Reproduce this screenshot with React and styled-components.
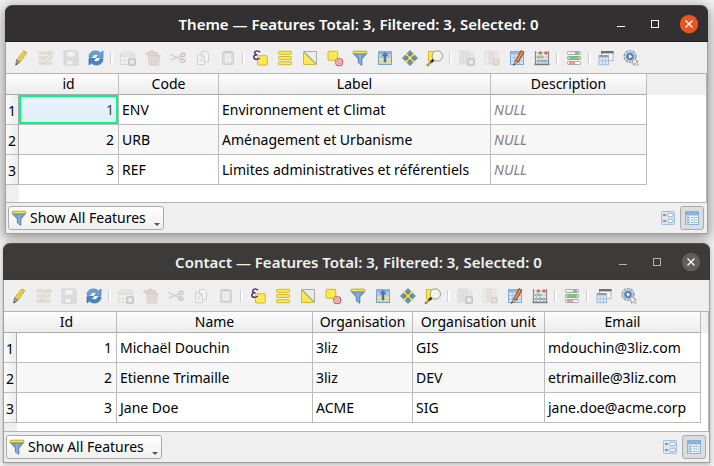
import React from "react";
import styled, { createGlobalStyle, css } from "styled-components";

const GlobalStyle = createGlobalStyle`
  * { box-sizing: border-box; }
  html { background: #f2f2f2; }
  body {
    margin: 0;
    font-family: "Noto Sans", "Open Sans", sans-serif;
    font-size: 14px;
    line-height: 20px;
    color: #000;
    overflow: hidden;
  }
  button { font: inherit; color: inherit; }
`;

const Desktop = styled.main`
  display: flex;
  flex-direction: column;
  gap: 9px;
  padding: 5px 4px 4px 3px;
`;

const Window = styled.section`
  margin: ${(p) => (p.$active ? "0 2px" : "0")};
  border-radius: 7px 7px 0 0;
  position: relative;
  z-index: ${(p) => (p.$active ? 0 : 1)};
  box-shadow: ${(p) =>
    p.$active
      ? "0 3px 14px 1px rgba(0, 0, 0, 0.42)"
      : "0 1px 5px rgba(0, 0, 0, 0.3)"};
`;

const TitleBar = styled.header`
  display: grid;
  grid-template-columns: 92px 1fr 88px;
  align-items: center;
  height: 37px;
  border-radius: 7px 7px 0 0;
  border-top: 1px solid ${(p) => (p.$active ? "#4b4948" : "#53514e")};
  border-bottom: 1px solid ${(p) => (p.$active ? "#1d1c1c" : "#3a3936")};
  background: ${(p) => (p.$active ? "#323030" : "#3c3b39")};
  color: ${(p) => (p.$active ? "#fff" : "#f1f1ef")};
`;

const Title = styled.h1`
  grid-column: 2;
  margin: 0;
  font-size: 15px;
  line-height: 20px;
  font-weight: 600;
  text-align: center;
  white-space: nowrap;
`;

const WindowButtons = styled.div`
  display: flex;
  align-items: center;
  justify-content: flex-end;
  gap: 14px;
  padding-right: 9px;
`;

const WindowButton = styled.button`
  display: flex;
  width: 20px;
  height: 20px;
  flex: none;
  padding: 0;
  border: 0;
  background: none;
  color: ${(p) => (p.$active ? "#fff" : "#b5b4b2")};
`;

const Client = styled.div`
  border: 1px solid #a0a0a0;
  border-top: 0;
  background: #efefef;
`;

const ToolBar = styled.div`
  display: flex;
  align-items: center;
  height: 31px;
  padding-left: 2px;
`;

const ToolButton = styled.button`
  display: flex;
  align-items: center;
  justify-content: center;
  width: 25px;
  height: 25px;
  flex: none;
  padding: 0;
  border: 0;
  background: none;
  opacity: ${(p) => (p.disabled ? 0.3 : 1)};
`;

const Separator = styled.span`
  display: flex;
  justify-content: center;
  width: 7px;
  height: 12px;
  flex: none;
  &::before {
    content: "";
    width: 2px;
    background: #fbfbfb;
    border-left: 1px solid #d2d2d2;
  }
`;

const Viewport = styled.div`
  border: 1px solid #b4b4b4;
  border-left: 0;
  padding-bottom: ${(p) => (p.$active ? "17px" : "8px")};
  background:
    linear-gradient(#efefef, #efefef) 0 0 / 100% 21px no-repeat,
    linear-gradient(#efefef, #efefef) 0 0 / 13px 100% no-repeat,
    #fff;
`;

const Grid = styled.table`
  table-layout: fixed;
  width: ${(p) => p.$width}px;
  border-collapse: separate;
  border-spacing: 0;
`;

const Col = styled.col`
  width: ${(p) => p.$width}px;
`;

const lines = css`
  border-right: 1px solid #bcbcbc;
  border-bottom: 1px solid #bcbcbc;
  white-space: nowrap;
`;

const ColumnHeader = styled.th`
  ${lines}
  height: 21px;
  padding: 0;
  border-bottom-color: #aaa;
  background: linear-gradient(#fdfdfd, #ececec);
  font-weight: 400;
  line-height: 20px;
  text-align: center;
`;

const Corner = styled.td`
  height: 21px;
  padding: 0;
  border-bottom: 1px solid #aaa;
  background: linear-gradient(#fdfdfd, #ececec);
`;

const RowHeader = styled.th`
  ${lines}
  height: 30px;
  padding: 2px 0 0;
  border-right-color: #aaa;
  background: linear-gradient(90deg, #fbfbfb, #ececec);
  font-weight: 400;
  line-height: 20px;
  text-align: center;
`;

const Row = styled.tr`
  background: #fff;
  &:nth-child(even) { background: #f7f7f7; }
`;

const Cell = styled.td`
  ${lines}
  height: 30px;
  padding: 0 4px 0 3px;
  text-align: ${(p) => (p.$numeric ? "right" : "left")};
  ${(p) => p.$null && "color: #808080; font-style: italic;"}
  ${(p) =>
    p.$selected &&
    "background: linear-gradient(#e8f5ff, #e2edf5); color: #444; box-shadow: inset 0 0 0 2px #00fa80;"}
`;

const StatusBar = styled.footer`
  display: flex;
  align-items: center;
  justify-content: space-between;
  height: 30px;
  padding: 0 3px 0 2px;
`;

const FilterButton = styled.button`
  display: flex;
  align-items: center;
  gap: 3px;
  height: 24px;
  padding: 0 3px 0 2px;
  border: 1px solid #aaa;
  border-radius: 3px;
  background: linear-gradient(#fff, #f0f0f0);
  white-space: nowrap;
`;

const MenuArrow = styled.span`
  align-self: flex-end;
  margin: 0 0 3px 5px;
  border: 3px solid transparent;
  border-top-color: #555;
  border-bottom: 0;
`;

const ViewSwitch = styled.div`
  display: flex;
`;

const ViewButton = styled.button`
  display: flex;
  align-items: center;
  justify-content: center;
  width: 24px;
  height: 24px;
  padding: 0;
  border: 1px solid ${(p) => (p["aria-pressed"] ? "#aaa" : "transparent")};
  border-radius: 3px;
  background: ${(p) => (p["aria-pressed"] ? "#dcdcdc" : "transparent")};
`;

const Svg = styled.svg`
  display: block;
  width: 16px;
  height: 16px;
  flex: none;
  overflow: visible;
`;

const YELLOW = "#fce94f";
const GOLD = "#d4b82e";
const BLUE = "#6b93c0";

const Star = () => (
  <g>
    <rect x="8.5" y="8.5" width="7" height="7" rx="1" fill="#8a8a80" stroke="#65655c" />
    <path d="M12 9.7v4.6M9.7 12h4.6M10.4 10.4l3.2 3.2M13.6 10.4l-3.2 3.2" stroke="#fff" />
  </g>
);

const FunnelShape = () => (
  <g>
    <path d="M1.2 3.5h13.6L9.8 9v6.3L6.4 13V9z" fill="#729fcf" stroke="#446d9c" strokeWidth=".8" />
    <path d="M8 5v9" stroke="#9dbfe2" />
    <rect x="1.2" y="1.2" width="13.6" height="2.5" rx=".8" fill={YELLOW} stroke="#a58f26" strokeWidth=".8" />
  </g>
);

const shapes = {
  edit: (
    <g>
      <path d="M3.5 10 10.8 1l3 1.6L7 12.3z" fill={YELLOW} stroke="#a48e2e" strokeWidth=".8" />
      <path d="m5.2 11 7.2-9" stroke="#c0a21e" />
      <path d="m3.5 10-.8 5.2L7 12.3z" fill="#aaa795" stroke="#6b6a61" strokeWidth=".7" />
      <path d="m3 13-.3 2.2 1.8-1.2z" fill="#333" />
    </g>
  ),
  multiEdit: (
    <g>
      <path d="M1 1.5h13v3H1zM1 6.5h13v3H1zM1 11.5h13v3H1z" fill="#c9bb80" stroke="#b5b09c" strokeWidth=".7" />
      <path d="m6 10.5 7.5-9 2 1.5L8.3 12 5.5 14z" fill="#e4e2d8" stroke="#88847a" />
    </g>
  ),
  save: (
    <g>
      <path d="M1 1h12.5l1.5 1.5V15H1z" fill="#b9b9b9" stroke="#8a8a8a" />
      <path d="M4 1.5h8V7H4z" fill="#fff" stroke="#999" strokeWidth=".6" />
      <path d="M3.5 10h7v5h-7z" fill="#f4f4f4" stroke="#888" strokeWidth=".7" />
      <path d="m9.5 12.5 4-6.5 2 1.3-4 6-2 1.2z" fill="#b8a98c" />
    </g>
  ),
  reload: (
    <g>
      <path d="M1 7.2C1.2 3 4 1 7.6 1c2.1 0 3.6.7 4.9 2L15 1v6.5H8.3l2.2-2.1C8.2 3.4 5 3.8 4 7.2z" fill="#6aa0d8" stroke="#3f74b0" strokeWidth=".7" />
      <path d="M15 8.8c-.2 4.2-3 6.2-6.6 6.2-2.1 0-3.6-.7-4.9-2L1 15V8.5h6.7l-2.2 2.1c2.3 2 5.5 1.6 6.5-1.8z" fill="#4784c4" stroke="#3569a5" strokeWidth=".7" />
    </g>
  ),
  add: (
    <g>
      <rect x=".5" y="3.5" width="14" height="11" fill="#f6f6f2" stroke="#aaa" />
      <path d="M2.5 1h11v3h-11z" fill="#ccc" />
      <path d="M1 6.5h13M1 10.5h13M5 7v7M10 7v7" stroke="#bbb" />
      <path d="M1 4.5h13v2H1z" fill="#c9bf80" />
      <Star />
    </g>
  ),
  remove: (
    <g>
      <path d="M1 2.5h12v2H1zM5 1h4v1.5H5z" fill="#bb8f8f" stroke="#9a7272" strokeWidth=".6" />
      <path d="M3.5 5.5h11l-1 9.5h-9z" fill="#dbb0b0" stroke="#9a7272" />
      <path d="M6.7 7.5v6M9 7.5v6M11.3 7.5v6" stroke="#9a7272" />
      <path d="M2.5 5h13v1.5h-13z" fill="#a97a7a" />
    </g>
  ),
  cut: (
    <g fill="none" stroke="#777">
      <path d="M.5 4.5 11 9.5M.5 10.2 10.5 6" strokeWidth="1.2" />
      <ellipse cx="12.7" cy="5" rx="2.3" ry="1.6" transform="rotate(-20 12.7 5)" stroke="#7d5252" strokeWidth="1.3" />
      <ellipse cx="12.7" cy="10.6" rx="2.3" ry="1.6" transform="rotate(20 12.7 10.6)" stroke="#7d5252" strokeWidth="1.3" />
    </g>
  ),
  copy: (
    <g fill="#fff" stroke="#8a8a8a">
      <path d="M6.5 1.5h4.8l2.2 2.2v8h-7z" />
      <path d="M2.5 4.5h4.8l2.2 2.2v8h-7z" />
      <path d="M6.8 4.5V7h2.7M4.5 9h3M4.5 11h3" fill="none" />
    </g>
  ),
  paste: (
    <g>
      <rect x="2.5" y="1.5" width="11" height="13" rx="1" fill="#b5afa0" stroke="#888" />
      <path d="M4.5 3.5h7v9h-7z" fill="#fff" stroke="#999" strokeWidth=".6" />
      <path d="M5.5 1h5v2h-5z" fill="#777" />
      <path d="M6 6h4.5M6 8h4.5M6 10h3" stroke="#bbb" />
    </g>
  ),
  expression: (
    <g>
      <rect x="5.5" y="5.7" width="9.8" height="9.3" rx=".8" fill={YELLOW} stroke={GOLD} />
      <path d="M8 2.2C6.8.4 2.8.5 2.6 2.8c0 1.3 1.2 2 3 2-2.4 0-4 .8-3.8 2.5.3 2.6 4.6 2.7 6 .6" fill="none" stroke="#fff" strokeWidth="3" opacity=".7" />
      <path d="M8 2.2C6.8.4 2.8.5 2.6 2.8c0 1.3 1.2 2 3 2-2.4 0-4 .8-3.8 2.5.3 2.6 4.6 2.7 6 .6" fill="none" stroke="#5c3566" strokeWidth="1.6" />
    </g>
  ),
  selectAll: (
    <g fill={YELLOW} stroke={GOLD}>
      <rect x="1.5" y="1.3" width="13" height="3" rx=".7" />
      <rect x="1.5" y="6.5" width="13" height="3" rx=".7" />
      <rect x="1.5" y="11.7" width="13" height="3" rx=".7" />
    </g>
  ),
  invert: (
    <g>
      <path d="M2 1.5h12.5V14z" fill="#ececec" stroke="#aaa" />
      <path d="M1.5 2v12.5H14z" fill={YELLOW} stroke={GOLD} />
      <path d="m1.5 1.5 13 13" stroke="#999" strokeWidth=".8" />
    </g>
  ),
  deselect: (
    <g>
      <rect x="1" y="1.3" width="9.7" height="9" rx=".8" fill={YELLOW} stroke={GOLD} />
      <rect x="8.8" y="8.8" width="6.8" height="6.8" rx="2" fill="#fbe3e3" stroke="#d84848" />
      <path d="m9.8 14.8 5-5M9.8 12l2.2-2.2M12.5 14.8l2.3-2.3" stroke="#d84848" strokeWidth=".9" />
    </g>
  ),
  filter: <FunnelShape />,
  moveTop: (
    <g>
      <rect x="1.5" y="1.5" width="13" height="13" fill="#f0f3f6" stroke="#729fcf" />
      <path d="M1 1h14v3.5H1z" fill="#86afdb" />
      <path d="M2 5h12v4H2z" fill="#c1d6ec" />
      <path d="M2 10h12v2H2z" fill={YELLOW} stroke={GOLD} strokeWidth=".4" />
      <path d="M2.5 13.2h11M2.5 6.8h11" stroke="#a5b1bd" strokeWidth=".8" />
      <path d="m8 2.4 3.3 3.2H9V12H7V5.6H4.7z" fill="#4a7bb2" stroke="#3a6696" strokeWidth=".5" />
    </g>
  ),
  pan: (
    <g>
      <path d="M4.5 4.5h7v7h-7z" fill={YELLOW} stroke={GOLD} />
      <path d="m3 3 2.5.2v2.3H3zM10.5 3H13v2.5h-2.5zM3 10.5h2.5V13H3zM10.5 10.5H13V13h-2.5z" fill={YELLOW} />
      <path d="m8 .5 3 3H9.2V6H6.8V3.5H5zM8 15.5l3-3H9.2V10H6.8v2.5H5zM.5 8l3-3v1.8H6v2.4H3.5V11zM15.5 8l-3-3v1.8H10v2.4h2.5V11z" fill={BLUE} stroke="#426c9b" strokeWidth=".6" />
    </g>
  ),
  zoom: (
    <g>
      <rect x="1.5" y="1.5" width="9" height="9" fill={YELLOW} stroke={GOLD} />
      <path d="m.8 15 5-4.7" stroke="#7d6b2d" strokeWidth="2.4" strokeLinecap="round" />
      <path d="M1 14.7 3 13" stroke="#e7c33a" strokeWidth="1.5" />
      <path d="m4.6 11.6 2.2-2" stroke="#222" strokeWidth="2.2" />
      <circle cx="10.3" cy="6" r="5.2" fill="#f4f4e3" stroke="#999" />
      <path d="M7.4 6A3.2 3.2 0 0 1 10.5 3" fill="none" stroke="#fff" strokeWidth="1.3" />
    </g>
  ),
  newField: (
    <g>
      <path d="M1 1h4v13H1zM6.5 1h4v13h-4z" fill="#c6c6be" stroke="#aaa" />
      <path d="M10.5 3H15v11h-4.5zM1 5h9.5M1 9h9.5" fill="#d7cf9d" stroke="#bbb" />
      <Star />
    </g>
  ),
  deleteField: (
    <g>
      <path d="M1 1h4v13H1zM10 1h4v13h-4z" fill="#ededed" stroke="#bbb" />
      <path d="M5.5 1h4v13h-4z" fill="#dfb4b4" stroke="#baa" />
      <path d="M1 4.5h13M1 8h13" stroke="#bbb" />
      <rect x="9" y="9" width="6.5" height="6.5" fill="#ad8989" />
      <path d="m10.7 10.7 3 3m0-3-3 3" stroke="#fff" />
    </g>
  ),
  organize: (
    <g>
      <rect x="1.5" y="1.5" width="13" height="13" fill="#d3e4f6" stroke="#80aad8" />
      <path d="M2 2h12v2.5H2z" fill="#91b8e1" />
      <path d="M2 7.5h12M2 11h12M5.5 2v12M10.5 2v12" stroke="#9dbde0" strokeWidth=".8" />
      <path d="M6.5 11 12 .5l3 1.7L9.4 12z" fill="#d97634" stroke="#7e421d" strokeWidth=".8" />
      <path d="m8 11.2 5.5-9.6" stroke="#f0a16c" />
      <path d="m6.5 11-2.3 4.5L9.4 12z" fill="#e3c7a1" stroke="#6a442b" strokeWidth=".6" />
      <path d="m5 13.8-.8 1.7 1.6-1z" fill="#222" />
    </g>
  ),
  calculator: (
    <g>
      <path d="M1.5 1v14M14.5 1v14" stroke="#8a8a8a" strokeWidth="1.2" />
      <path d="M2 3h12M2 7h12M2 11h12" stroke="#b5b5b5" strokeWidth=".8" />
      <path d="M.5 14.4h15" stroke="#777" strokeWidth="1.6" />
      <g fill="#f08a8a" stroke="#d03030" strokeWidth=".7"><circle cx="6.3" cy="3" r="1.3" /><circle cx="12" cy="3" r="1.3" /></g>
      <g fill="#b9e6b9" stroke="#58b064" strokeWidth=".7"><circle cx="4.7" cy="7" r="1.3" /><circle cx="8" cy="7" r="1.3" /></g>
      <g fill="#bdd5ee" stroke="#5d88b5" strokeWidth=".7"><circle cx="4.7" cy="11" r="1.3" /><circle cx="8.3" cy="11" r="1.3" /><circle cx="11.7" cy="11" r="1.3" /></g>
    </g>
  ),
  conditional: (
    <g>
      <rect x="1.5" y="1.5" width="13" height="3" rx=".8" fill="#efefef" stroke="#aaa" />
      <rect x="1.5" y="6.5" width="13" height="3" rx=".8" fill="#a6dfa6" stroke="#7fb87f" />
      <rect x="1.5" y="11.5" width="13" height="3" rx=".8" fill="#fafafa" stroke="#aaa" />
      <path d="M9 3h4" stroke="#555" />
      <path d="M4 8h8" stroke="#5aa05a" />
      <path d="M3 13h6" stroke="#dd3434" />
    </g>
  ),
  dock: (
    <g>
      <rect x="3.5" y="1.5" width="11.5" height="9" fill="#f6f6f6" stroke="#b5b5b5" />
      <path d="M3 1h12.5v2.4H3z" fill="#707070" />
      <rect x="1" y="5.5" width="9.5" height="9.2" fill="#dceaf8" stroke="#9dbbd9" />
      <path d="M1 5h9.5v2.3H1z" fill="#999" />
      <path d="M4.2 8v6.5M7.4 8v6.5M1.5 10.8h8.7" stroke="#9dbbdc" strokeWidth=".8" />
    </g>
  ),
  actions: (
    <g>
      <circle cx="7" cy="6.5" r="5.9" fill="#eee" stroke="#999" strokeWidth="1.4" strokeDasharray="2.8 .9" />
      <circle cx="7" cy="6.5" r="4.2" fill="#4f80b5" stroke="#9dbbdc" strokeWidth="1.2" />
      <path d="m5.9 4.3 3.4 2.2-3.4 2.2z" fill="#fff" />
      <path d="m9 8.5 6.3 3-2.4.8 2.4 2.3-1.2 1.1-2.3-2.4-1.1 2z" fill="#fff" stroke="#888" strokeWidth=".8" />
    </g>
  ),
  formView: (
    <g>
      <rect x="1.5" y="1.5" width="13" height="13" rx=".8" fill="#dce7f3" stroke="#9fbfe1" />
      <path d="M3 5h3M3 11h3" stroke="#444" strokeWidth="1.2" />
      <rect x="8" y="3.3" width="5" height="3.4" rx=".6" fill="#fff" stroke="#9ab0c6" />
      <rect x="8" y="9.3" width="5" height="3.4" rx=".6" fill="#fff" stroke="#9ab0c6" />
    </g>
  ),
  tableView: (
    <g>
      <rect x="1.5" y="1.5" width="13" height="13" fill="#fff" stroke="#8cb1da" />
      <path d="M1 1h14v4.5H1z" fill="#86afdb" />
      <path d="M2 6h3.5v8.5H2z" fill="#c3daf2" />
      <path d="M3 7.5h2M3 10h2M3 12.5h2M7 7.5h2.8M7 10h2.8M7 12.5h2.8M11.3 7.5h2.2M11.3 10h2.2M11.3 12.5h2.2" stroke="#8fa9c4" />
      <path d="M5.8 2v12M10.5 2v12" stroke="#a4c4e6" strokeWidth=".7" />
    </g>
  ),
};

const Icon = ({ name }) => (
  <Svg viewBox="0 0 16 16" fill="none" aria-hidden="true">
    {shapes[name]}
  </Svg>
);

const toolGroups = [
  [
    ["edit", "Toggle editing mode"],
    ["multiEdit", "Toggle multi edit mode", true],
    ["save", "Save edits", true],
    ["reload", "Reload the table"],
  ],
  [
    ["add", "Add feature", true],
    ["remove", "Delete selected features", true],
    ["cut", "Cut", true],
    ["copy", "Copy", true],
    ["paste", "Paste", true],
  ],
  [
    ["expression", "Select features using an expression"],
    ["selectAll", "Select all"],
    ["invert", "Invert selection"],
    ["deselect", "Deselect all"],
    ["filter", "Filter features"],
    ["moveTop", "Move selection to top"],
    ["pan", "Pan map to selection"],
    ["zoom", "Zoom map to selection"],
  ],
  [
    ["newField", "New field", true],
    ["deleteField", "Delete field", true],
    ["organize", "Organize columns"],
    ["calculator", "Open field calculator"],
  ],
  [["conditional", "Conditional formatting"]],
  [
    ["dock", "Dock attribute table"],
    ["actions", "Actions"],
  ],
];

const WindowControls = ({ active }) => (
  <WindowButtons>
    <WindowButton $active={active} aria-label="Minimize">
      <svg width="20" height="20" viewBox="0 0 20 20">
        <path d="M6 12.5h8" stroke="currentColor" />
      </svg>
    </WindowButton>
    <WindowButton $active={active} aria-label="Maximize">
      <svg width="20" height="20" viewBox="0 0 20 20">
        <rect x="6.5" y="6.5" width="7" height="7" fill="none" stroke="currentColor" />
      </svg>
    </WindowButton>
    <WindowButton $active={active} aria-label="Close">
      <svg width="20" height="20" viewBox="0 0 20 20">
        <circle cx="10" cy="10" r="9.2" fill={active ? "#e95420" : "#605f5d"} />
        <path d="m6.5 6.5 7 7m0-7-7 7" stroke="#fff" strokeWidth="1.3" />
      </svg>
    </WindowButton>
  </WindowButtons>
);

function AttributeTable({ name, columns, rows, active, current }) {
  const width = columns.reduce((sum, c) => sum + c.width, 13);
  return (
    <Window $active={active}>
      <TitleBar $active={active}>
        <Title>{name} — Features Total: 3, Filtered: 3, Selected: 0</Title>
        <WindowControls active={active} />
      </TitleBar>
      <Client>
        <ToolBar role="toolbar" aria-label={`${name} tools`}>
          {toolGroups.map((group, i) => (
            <React.Fragment key={i}>
              {i > 0 && <Separator />}
              {group.map(([icon, label, disabled]) => (
                <ToolButton key={icon} aria-label={label} disabled={disabled}>
                  <Icon name={icon} />
                </ToolButton>
              ))}
            </React.Fragment>
          ))}
        </ToolBar>
        <Viewport $active={active}>
          <Grid $width={width}>
            <colgroup>
              <Col $width={13} />
              {columns.map((c) => <Col key={c.label} $width={c.width} />)}
            </colgroup>
            <thead>
              <tr>
                <Corner />
                {columns.map((c) => (
                  <ColumnHeader key={c.label} scope="col">{c.label}</ColumnHeader>
                ))}
              </tr>
            </thead>
            <tbody>
              {rows.map((row, r) => (
                <Row key={r}>
                  <RowHeader scope="row">{r + 1}</RowHeader>
                  {row.map((value, c) => (
                    <Cell
                      key={c}
                      $numeric={typeof value === "number"}
                      $null={value === null}
                      $selected={current && r === 0 && c === 0}
                    >
                      {value === null ? "NULL" : value}
                    </Cell>
                  ))}
                </Row>
              ))}
            </tbody>
          </Grid>
        </Viewport>
        <StatusBar>
          <FilterButton aria-haspopup="menu">
            <Icon name="filter" />
            Show All Features
            <MenuArrow />
          </FilterButton>
          <ViewSwitch>
            <ViewButton aria-label="Form view" aria-pressed={false}>
              <Icon name="formView" />
            </ViewButton>
            <ViewButton aria-label="Table view" aria-pressed={true}>
              <Icon name="tableView" />
            </ViewButton>
          </ViewSwitch>
        </StatusBar>
      </Client>
    </Window>
  );
}

const themeColumns = [
  { label: "id", width: 100 },
  { label: "Code", width: 100 },
  { label: "Label", width: 272 },
  { label: "Description", width: 156 },
];

const themeRows = [
  [1, "ENV", "Environnement et Climat", null],
  [2, "URB", "Aménagement et Urbanisme", null],
  [3, "REF", "Limites administratives et référentiels", null],
];

const contactColumns = [
  { label: "Id", width: 100 },
  { label: "Name", width: 196 },
  { label: "Organisation", width: 100 },
  { label: "Organisation unit", width: 132 },
  { label: "Email", width: 156 },
];

const contactRows = [
  [1, "Michaël Douchin", "3liz", "GIS", "mdouchin@3liz.com"],
  [2, "Etienne Trimaille", "3liz", "DEV", "etrimaille@3liz.com"],
  [3, "Jane Doe", "ACME", "SIG", "jane.doe@acme.corp"],
];

export default function App() {
  return (
    <>
      <GlobalStyle />
      <Desktop>
        <AttributeTable name="Theme" columns={themeColumns} rows={themeRows} active current />
        <AttributeTable name="Contact" columns={contactColumns} rows={contactRows} />
      </Desktop>
    </>
  );
}
